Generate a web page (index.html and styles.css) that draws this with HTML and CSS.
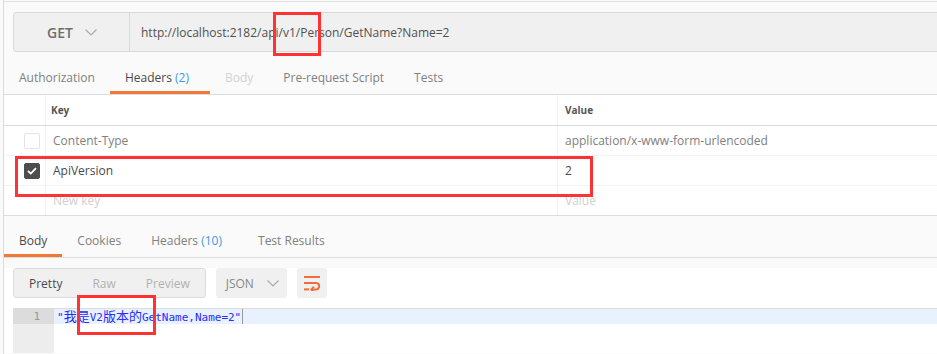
FILE: index.html
```html
<!DOCTYPE html>
<html lang="zh-CN">
<head>
    <meta charset="UTF-8">
    <meta name="viewport" content="width=device-width, initial-scale=1.0">
    <title>GetName</title>
    <link rel="stylesheet" href="styles.css">
</head>
<body>
    <div class="page">
        <div class="top-strip"></div>

        <div class="url-bar">
            <div class="method">
                <span>GET</span>
                <svg class="chevron" width="12" height="7" viewBox="0 0 12 7"><polyline points="0.5,0.5 6,6 11.5,0.5" fill="none" stroke="#aaa" stroke-width="1.2"/></svg>
            </div>
            <div class="url">http://localhost:2182/api/v1/Person/GetName?Name=2</div>
        </div>

        <nav class="tabs req-tabs">
            <span class="tab">Authorization</span>
            <span class="tab active">Headers <span class="count">(2)</span></span>
            <span class="tab disabled">Body</span>
            <span class="tab">Pre-request Script</span>
            <span class="tab">Tests</span>
        </nav>

        <div class="kv-table">
            <div class="kv-row kv-head">
                <div class="cell check"></div>
                <div class="cell key">Key</div>
                <div class="cell value">Value</div>
            </div>
            <div class="kv-row">
                <div class="cell check"><span class="box"></span></div>
                <div class="cell key">Content-Type</div>
                <div class="cell value">application/x-www-form-urlencoded</div>
            </div>
            <div class="kv-row on">
                <div class="cell check">
                    <span class="box checked">
                        <svg width="10" height="8" viewBox="0 0 10 8"><polyline points="1,4 3.8,6.6 9,1.2" fill="none" stroke="#fff" stroke-width="1.8"/></svg>
                    </span>
                </div>
                <div class="cell key">ApiVersion</div>
                <div class="cell value">2</div>
            </div>
            <div class="kv-row last">
                <div class="cell check"></div>
                <div class="cell key placeholder">New key</div>
                <div class="cell value placeholder">Value</div>
            </div>
        </div>

        <nav class="tabs res-tabs">
            <span class="tab active">Body</span>
            <span class="tab">Cookies</span>
            <span class="tab">Headers <span class="count">(10)</span></span>
            <span class="tab">Test Results</span>
        </nav>

        <div class="response">
            <div class="toolbar">
                <div class="btn-group">
                    <span class="btn current">Pretty</span>
                    <span class="btn">Raw</span>
                    <span class="btn">Preview</span>
                </div>
                <div class="select">
                    <span>JSON</span>
                    <svg class="chevron" width="12" height="7" viewBox="0 0 12 7"><polyline points="0.5,0.5 6,6 11.5,0.5" fill="none" stroke="#aaa" stroke-width="1.2"/></svg>
                </div>
                <div class="wrap-btn">
                    <svg width="18" height="16" viewBox="0 0 18 16">
                        <line x1="1" y1="2" x2="17" y2="2" stroke="#f26b3a" stroke-width="2"/>
                        <path d="M1 8 H13 A3.2 3.2 0 0 1 13 14.4 H9" fill="none" stroke="#f26b3a" stroke-width="2"/>
                        <polyline points="11,11.6 8.2,14.4 11,17.2" fill="none" stroke="#f26b3a" stroke-width="1.8"/>
                        <line x1="1" y1="14.4" x2="6" y2="14.4" stroke="#f26b3a" stroke-width="2"/>
                    </svg>
                </div>
            </div>

            <div class="editor">
                <div class="gutter">
                    <div class="line-no active">1</div>
                </div>
                <div class="code">
                    <div class="code-line active"><span class="str">"<span class="cjk">我是</span>V2<span class="cjk">版本的</span>GetName,Name=2"</span><span class="cursor"></span></div>
                </div>
            </div>
        </div>

        <!-- red annotation boxes -->
        <div class="mark mark-url"></div>
        <div class="mark mark-row"></div>
        <div class="mark mark-code"></div>
    </div>
</body>
</html>
```

FILE: styles.css
```css
* {
    margin: 0;
    padding: 0;
    box-sizing: border-box;
}

html, body {
    overflow: hidden;
}

body {
    width: 937px;
    height: 354px;
    background: #fafafa;
    font-family: "Open Sans", "Noto Sans", sans-serif;
    font-size: 12px;
    color: #505050;
}

.page {
    position: relative;
    height: 354px;
    margin-left: 3px;
    padding-top: 1px;
    border-left: 1px solid #dcdcdc;
}

.top-strip {
    height: 11px;
    border-top: 1px solid #e0e0e0;
}

/* url bar */
.url-bar {
    display: flex;
    height: 40px;
    margin-left: 9px;
    margin-right: -20px;
    background: #f0f0f0;
    border: 1px solid #d9d9d9;
    border-radius: 3px;
}

.method {
    display: flex;
    align-items: center;
    gap: 12px;
    width: 116px;
    padding-left: 33px;
    border-right: 1px solid #d9d9d9;
    font-size: 14px;
    font-weight: 600;
    color: #6e6e6e;
}

.url {
    display: flex;
    align-items: center;
    padding-left: 11px;
    font-size: 12px;
    color: #505050;
}

/* tabs */
.tabs {
    display: flex;
    border-bottom: 1px solid #dcdcdc;
}

.req-tabs {
    height: 43px;
}

.res-tabs {
    height: 42px;
}

.tab {
    padding: 0 15px;
    border-bottom: 3px solid transparent;
    color: #808080;
    white-space: nowrap;
}

.req-tabs .tab {
    height: 42px;
    padding-top: 17px;
}

.res-tabs .tab {
    height: 41px;
    padding-top: 16px;
}

.tab.active {
    border-bottom-color: #f07a35;
    color: #4a4a4a;
}

.tab.disabled {
    color: #d2d2d2;
}

.count {
    margin-right: 6px;
    color: #3d9be9;
}

/* headers table */
.kv-table {
    background: #fff;
}

.kv-row {
    display: grid;
    grid-template-columns: 41px 512px 1fr;
    height: 30px;
    border-bottom: 1px solid #f2f2f2;
}

.kv-head {
    height: 31px;
    border-bottom-color: #dcdcdc;
}

.kv-row.last {
    border-bottom-color: #dcdcdc;
}

.cell {
    display: flex;
    align-items: center;
    color: #808080;
}

.cell.key {
    padding-left: 7px;
    border-left: 1px solid #f2f2f2;
}

.cell.value {
    padding-left: 7px;
    border-left: 1px solid #f2f2f2;
}

.kv-head .cell {
    font-size: 10px;
    font-weight: 700;
    color: #555;
}

.kv-head .cell.key {
    padding-left: 5px;
}

.kv-row.on .cell {
    color: #4a4a4a;
}

.cell.placeholder {
    color: #d0d0d0;
}

.check {
    padding-left: 20px;
}

.box {
    display: flex;
    align-items: center;
    justify-content: center;
    width: 16px;
    height: 16px;
    border: 1px solid #e3e3e3;
    border-radius: 2px;
    background: #fff;
}

.box.checked {
    background: #4d4d4d;
    border-color: #4d4d4d;
}

/* response */
.res-tabs .tab {
    font-size: 12px;
}

.response {
    background: #fff;
}

.toolbar {
    display: flex;
    gap: 10px;
    height: 30px;
    margin: 10px 0 10px 9px;
}

.btn-group {
    display: flex;
    align-items: center;
    height: 30px;
    background: #f0f0f0;
    border: 1px solid #dcdcdc;
    border-radius: 3px;
}

.btn {
    padding: 0 15px;
    color: #b0b0b0;
}

.btn.current {
    color: #4a4a4a;
}

.select {
    display: flex;
    align-items: center;
    gap: 13px;
    width: 71px;
    padding-left: 10px;
    background: #f0f0f0;
    border-radius: 3px;
    color: #888;
}

.wrap-btn {
    display: flex;
    align-items: center;
    justify-content: center;
    width: 30px;
    height: 30px;
    background: #f0f0f0;
    border-radius: 3px;
}

.editor {
    display: flex;
    height: 45px;
    margin-left: 9px;
    border-top: 1px solid #dcdcdc;
}

.gutter {
    width: 41px;
    background: #ededed;
}

.line-no {
    height: 15px;
    padding-right: 14px;
    text-align: right;
    font-family: "DejaVu Sans Mono", monospace;
    font-size: 11px;
    line-height: 15px;
    color: #999;
}

.line-no.active {
    background: #dcdcdc;
}

.code {
    flex: 1;
}

.code-line {
    display: flex;
    align-items: center;
    height: 15px;
    padding-left: 3px;
    font-family: "DejaVu Sans Mono", "Noto Sans CJK SC", monospace;
    font-size: 11px;
    line-height: 15px;
    white-space: pre;
}

.code-line.active {
    background: #e8f2ff;
}

.str {
    color: #2a2aff;
}

.cjk {
    font-family: "Noto Sans CJK SC", sans-serif;
    font-size: 13px;
}

.cursor {
    width: 1px;
    height: 15px;
    margin-left: 1px;
    background: #999;
}

/* annotation boxes */
.mark {
    position: absolute;
    border: 3px solid #ff3333;
}

.mark-url {
    left: 269px;
    top: 12px;
    width: 48px;
    height: 44px;
}

.mark-row {
    left: 11px;
    top: 156px;
    width: 578px;
    height: 41px;
}

.mark-code {
    left: 73px;
    top: 295px;
    width: 79px;
    height: 40px;
}
```
